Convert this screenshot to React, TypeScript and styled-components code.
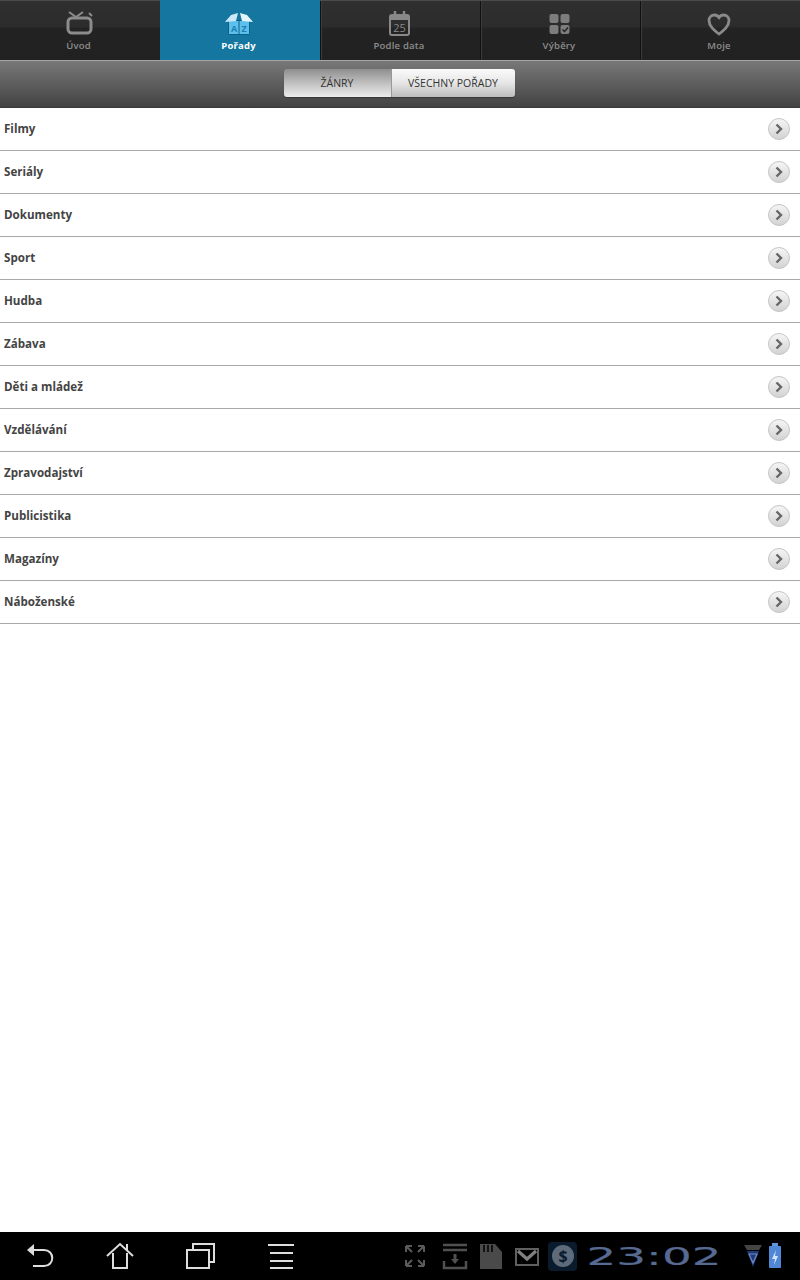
import React from 'react';
import styled, { createGlobalStyle } from 'styled-components';

const Global = createGlobalStyle`
  html, body { margin: 0; padding: 0; background: #fff; }
  body { font-family: "Open Sans", "Noto Sans", sans-serif; }
`;

const Page = styled.div`
  width: 800px; height: 1280px; display: flex; flex-direction: column; overflow: hidden; background: #fff;
`;
const TabBar = styled.nav`
  height: 60px; display: grid; grid-template-columns: repeat(5, 160px); flex: none;
  background: linear-gradient(#2f2f2f 0, #2c2c2c 26px, #232323 27px, #212121 100%);
  border-top: 1px solid #4a4a4a; box-sizing: border-box;
`;
const Tab = styled.div<{ $active?: boolean; $first?: boolean }>`
  min-width: 0; display: flex; flex-direction: column; align-items: center; box-sizing: border-box;
  padding: ${p => (p.$active ? '8px 3px 0 0' : '7px 3px 0 0')};
  margin-top: ${p => (p.$active ? '-1px' : '0')};
  background: ${p => (p.$active ? '#15769f' : 'transparent')};
  border-left: ${p => (p.$first || p.$active ? '0' : '1px solid #111')};
  box-shadow: ${p => (p.$first || p.$active ? 'none' : 'inset 1px 0 1px #3c3c3c')};
`;
const TabIcon = styled.svg`
  width: 32px; height: 30px; flex: none; display: block;
`;
const TabLabel = styled.span<{ $active?: boolean }>`
  margin-top: 1px; font-size: 9.5px; line-height: 14px; letter-spacing: 0.2px;
  font-weight: ${p => (p.$active ? 700 : 600)};
  color: ${p => (p.$active ? '#fff' : '#8d8d8d')};
`;
const Toolbar = styled.div`
  height: 48px; flex: none; box-sizing: border-box; display: flex; justify-content: center; padding: 8px 2px 0 0;
  background: linear-gradient(#787878, #434343);
  border-top: 1px solid #a5a5a5; border-bottom: 1px solid #3a3a3a;
`;
const Segmented = styled.div`
  display: flex; height: 28px; border-radius: 3px; overflow: hidden; box-shadow: 0 1px 1px rgba(0,0,0,.3);
`;
const Segment = styled.div<{ $pressed?: boolean }>`
  width: ${p => (p.$pressed ? '107px' : '124px')};
  display: flex; align-items: center; justify-content: center;
  font-size: 10.5px; color: #333; box-sizing: border-box;
  background: ${p => (p.$pressed ? 'linear-gradient(#8e8e8e, #c4c4c4 55%, #ececec)' : 'linear-gradient(#fbfbfb, #e6e6e6 50%, #bcbcbc)')};
  border-left: ${p => (p.$pressed ? '0' : '1px solid #999')};
`;
const List = styled.ul`
  margin: 0; padding: 0; list-style: none; flex: 1; background: #fff;
`;
const Row = styled.li`
  height: 43px; box-sizing: border-box; padding: 0 9px 2px 4px; display: flex; align-items: center; justify-content: space-between;
  border-bottom: 1px solid #a8a8a8;
  font-size: 11.6px; font-weight: 700; color: #444;
`;
const Chevron = styled.svg`
  width: 24px; height: 24px; flex: none; display: block; margin-top: 1px;
`;
const SystemBar = styled.footer`
  height: 48px; flex: none; background: #000; display: flex; align-items: center; position: relative;
`;
const NavIcons = styled.div`
  display: flex; align-items: center; width: 392px; padding-left: 24px; gap: 48px; box-sizing: border-box;
`;
const NavIcon = styled.svg`
  width: 32px; height: 30px; flex: none; display: block;
  fill: none; stroke: #ddd; stroke-width: 2;
`;
const Status = styled.div`
  display: flex; align-items: center; flex: 1;
`;
const StatusIcon = styled.svg<{ $w: number; $gap?: number }>`
  width: ${p => p.$w}px; height: 30px; flex: none; display: block; margin-left: ${p => p.$gap ?? 0}px;
`;
const CoinBox = styled.div`
  width: 29px; height: 29px; background: #0b1b2e; border-radius: 4px; display: flex; align-items: center; justify-content: center; margin-left: 9px;
`;
const Clock = styled.div`
  width: 134px; margin-left: 10px; text-align: center; font-family: "DejaVu Sans", sans-serif; font-weight: 400; font-size: 26px; line-height: 30px;
  color: #566a92; -webkit-text-stroke: 0.2px #566a92; transform: scale(1.8, 0.98); transform-origin: center; white-space: nowrap;
`;

const genres = ['Filmy','Seriály','Dokumenty','Sport','Hudba','Zábava','Děti a mládež','Vzdělávání','Zpravodajství','Publicistika','Magazíny','Náboženské'];

export default function App() {
  return (
    <Page>
      <Global />
      <TabBar>
        <Tab $first>
          <TabIcon viewBox="0 0 32 30" fill="none">
            <path d="M6 4l7 5 7-5" stroke="#8c8c8c" strokeWidth="2" />
            <path d="M26 5l3 3" stroke="#8c8c8c" strokeWidth="2" />
            <rect x="5" y="10" width="23" height="15" rx="4" stroke="#8c8c8c" strokeWidth="3" />
          </TabIcon>
          <TabLabel>Úvod</TabLabel>
        </Tab>
        <Tab $active>
          <TabIcon viewBox="0 0 32 30">
            <rect x="5" y="12" width="22" height="15" rx="2" fill="#0f5f85" />
            <rect x="6" y="13" width="9.500" height="13" fill="#5cc0ee" />
            <rect x="16.500" y="13" width="9.500" height="13" fill="#5cc0ee" />
            <path d="M15 5L8 7 2 14l11-1z" fill="#cbe9f8" />
            <path d="M17 5l7 2 6 7-11-1z" fill="#e6f5fc" />
            <text x="11" y="24" fontSize="9" fontWeight="700" textAnchor="middle" fill="#1f7fb0" fontFamily="Open Sans, sans-serif">A</text>
            <text x="21" y="24" fontSize="9" fontWeight="700" textAnchor="middle" fill="#1f7fb0" fontFamily="Open Sans, sans-serif">Z</text>
          </TabIcon>
          <TabLabel $active>Pořady</TabLabel>
        </Tab>
        <Tab>
          <TabIcon viewBox="0 0 32 30" fill="none">
            <rect x="7" y="7" width="19" height="20" rx="2" stroke="#888" strokeWidth="2" />
            <rect x="7" y="7" width="19" height="5" fill="#888" />
            <path d="M12 3v6M21 3v6" stroke="#888" strokeWidth="2.500" />
            <text x="16.500" y="24" fontSize="11" textAnchor="middle" fill="#888" fontFamily="Open Sans, sans-serif">25</text>
          </TabIcon>
          <TabLabel>Podle data</TabLabel>
        </Tab>
        <Tab>
          <TabIcon viewBox="0 0 32 30" fill="none">
            <rect x="6.500" y="6" width="9" height="9" rx="2" fill="#7d7d7d" />
            <rect x="17.500" y="6" width="9" height="9" rx="2" fill="#7d7d7d" />
            <rect x="6.500" y="17" width="9" height="9" rx="2" fill="#7d7d7d" />
            <rect x="17.500" y="17" width="9" height="9" rx="2" fill="#7d7d7d" />
            <path d="M19.500 21.500l2 2 3.500-4" stroke="#222" strokeWidth="1.400" />
          </TabIcon>
          <TabLabel>Výběry</TabLabel>
        </Tab>
        <Tab>
          <TabIcon viewBox="0 0 32 30" fill="none">
            <path d="M16 26C11 22 6 18 6 12.500C6 9 8.500 7 11.500 7C13.500 7 15 8 16 9.500C17 8 18.500 7 20.500 7C23.500 7 26 9 26 12.500C26 18 21 22 16 26Z" stroke="#8a8a8a" strokeWidth="2.800" />
          </TabIcon>
          <TabLabel>Moje</TabLabel>
        </Tab>
      </TabBar>
      <Toolbar>
        <Segmented>
          <Segment $pressed>ŽÁNRY</Segment>
          <Segment>VŠECHNY POŘADY</Segment>
        </Segmented>
      </Toolbar>
      <List>
        {genres.map(g => (
          <Row key={g}>
            {g}
            <Chevron viewBox="0 0 24 24">
              <defs>
                <linearGradient id="cg" x1="0" y1="0" x2="0" y2="1">
                  <stop offset="0" stopColor="#f6f6f6" />
                  <stop offset="1" stopColor="#d2d2d2" />
                </linearGradient>
              </defs>
              <circle cx="12" cy="12" r="10.500" fill="url(#cg)" stroke="#c6c6c6" />
              <path d="M9.500 7.500l4.500 4.500-4.500 4.500" fill="none" stroke="#666" strokeWidth="2.400" />
            </Chevron>
          </Row>
        ))}
      </List>
      <SystemBar>
        <NavIcons>
          <NavIcon viewBox="0 0 32 30">
            <path d="M6 9h14c11 0 11 16 0 16H9" />
            <path d="M3 9l7-6v12z" fill="#ddd" stroke="none" />
          </NavIcon>
          <NavIcon viewBox="0 0 32 30">
            <path d="M3 15L16 3l13 12M9 12v15h14V12M23 9V3" />
          </NavIcon>
          <NavIcon viewBox="0 0 32 30">
            <rect x="3" y="9" width="22" height="18" />
            <path d="M9 9V3h21v18h-5" />
          </NavIcon>
          <NavIcon viewBox="0 0 32 30">
            <path d="M4 4h26M6 12h23M6 20h23M6 27h23" />
          </NavIcon>
        </NavIcons>
        <Status>
          <StatusIcon $w={24} $gap={11} viewBox="0 0 24 30" fill="none" stroke="#5a5a5a" strokeWidth="2">
            <path d="M3 5l6 6M3 5h6M3 5v6M21 5l-6 6M21 5h-6M21 5v6M3 25l6-6M3 25h6M3 25v-6M21 25l-6-6M21 25h-6M21 25v-6" />
          </StatusIcon>
          <StatusIcon $w={26} $gap={15} viewBox="0 0 26 30" fill="none">
            <path d="M1 4h24M1 9h24" stroke="#505050" strokeWidth="2.500" />
            <path d="M2 20v7h22v-7" stroke="#505050" strokeWidth="2.500" />
            <path d="M13 13v6" stroke="#505050" strokeWidth="3" />
            <path d="M9 18h8l-4 5z" fill="#505050" />
          </StatusIcon>
          <StatusIcon $w={24} $gap={11} viewBox="0 0 24 30">
            <path d="M1 3h15l7 8v17H1z" fill="#4a4a4a" />
            <path d="M5 4v7M9 4v7M13 4v7" stroke="#000" strokeWidth="1.500" />
          </StatusIcon>
          <StatusIcon $w={24} $gap={12} viewBox="0 0 24 30" fill="none">
            <rect x="1" y="8" width="22" height="16" stroke="#606060" strokeWidth="2" />
            <path d="M3 10l9 8 9-8" stroke="#808080" strokeWidth="3.200" />
          </StatusIcon>
          <CoinBox>
            <StatusIcon $w={22} viewBox="0 0 22 30">
              <circle cx="11" cy="15" r="11" fill="#5d6b7b" />
              <text x="11" y="21" fontSize="16" fontWeight="700" textAnchor="middle" fill="#0b1b2e" fontFamily="Open Sans, sans-serif">$</text>
            </StatusIcon>
          </CoinBox>
          <Clock>23:02</Clock>
          <StatusIcon $w={18} $gap={23} viewBox="0 0 18 30" fill="none">
            <path d="M0 4h18l-3 5H3z" fill="#444" />
            <path d="M3 10h12l-6 16z" fill="#1e3a78" />
            <path d="M5 13h8l-4 9z" stroke="#6f8bc4" strokeWidth="1.200" />
          </StatusIcon>
          <StatusIcon $w={14} $gap={6} viewBox="0 0 14 30">
            <rect x="1" y="5" width="12" height="22" rx="1" fill="#4f86d6" />
            <rect x="4" y="2" width="6" height="3" fill="#5f93de" />
            <path d="M8 9l-4 9h3l-1 6 4-9H7z" fill="#d3e3fa" />
          </StatusIcon>
        </Status>
      </SystemBar>
    </Page>
  );
}
